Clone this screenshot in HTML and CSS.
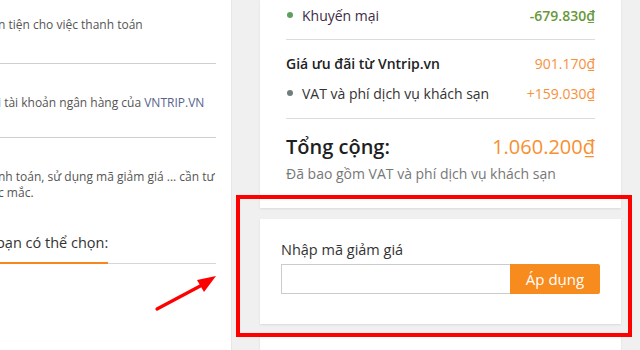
FILE: index.html
```html
<!DOCTYPE html>
<html lang="vi">
<head>
<meta charset="utf-8">
<title>Thanh toán</title>
<link rel="stylesheet" href="styles.css">
</head>
<body>
<div class="page">
  <section class="left">
    <div class="pay-block b1">
      <p class="pay-text">n tiện cho việc thanh toán</p>
    </div>
    <div class="pay-block b2">
      <p class="pay-text">i tài khoản ngân hàng của <span class="brand">VNTRIP.VN</span></p>
    </div>
    <div class="pay-block b3">
      <p class="pay-text">nh toán, sử dụng mã giảm giá ... cần tư<br>c mắc.</p>
    </div>
    <div class="choose">
      <span class="choose-title">bạn có thể chọn:</span>
    </div>
  </section>

  <aside class="right">
    <div class="card summary">
      <div class="sec sec-promo">
        <div class="row">
          <span class="label"><i class="dot dot-green"></i>Khuyến mại</span>
          <span class="amt green">-679.830₫</span>
        </div>
      </div>
      <div class="sec sec-price">
        <div class="row">
          <span class="label strong">Giá ưu đãi từ Vntrip.vn</span>
          <span class="amt orange">901.170₫</span>
        </div>
        <div class="row">
          <span class="label"><i class="dot dot-gray"></i>VAT và phí dịch vụ khách sạn</span>
          <span class="amt orange">+159.030₫</span>
        </div>
      </div>
      <div class="sec sec-total">
        <div class="row total-row">
          <span class="total-label">Tổng cộng:</span>
          <span class="total-amt">1.060.200₫</span>
        </div>
        <p class="note">Đã bao gồm VAT và phí dịch vụ khách sạn</p>
      </div>
    </div>

    <div class="card coupon">
      <label class="coupon-label" for="code">Nhập mã giảm giá</label>
      <div class="coupon-form">
        <input id="code" class="coupon-input" type="text">
        <button class="coupon-btn" type="button">Áp dụng</button>
      </div>
    </div>

    <div class="card next"></div>
  </aside>
</div>

<div class="highlight"></div>
<svg class="arrow" width="80" height="50" viewBox="150 270 80 50" xmlns="http://www.w3.org/2000/svg">
  <line x1="157" y1="309" x2="204" y2="284" stroke="#ff0000" stroke-width="3.2" stroke-linecap="round"/>
  <polygon points="216,276 197,280 204,292" fill="#ff0000"/>
</svg>
</body>
</html>
```

FILE: styles.css
```css
* { box-sizing: border-box; }
html, body { margin: 0; padding: 0; }
body {
  font-family: "Open Sans", "Noto Sans", sans-serif;
  width: 640px;
  height: 350px;
  overflow: hidden;
  background: #f0f0f0;
  position: relative;
}
.page {
  display: flex;
  height: 350px;
}

/* left column */
.left {
  width: 232px;
  flex: 0 0 232px;
  background: #fff;
  border-right: 1px solid #e6e6e6;
  padding-right: 15px;
}
.pay-block {
  border-bottom: 1px solid #cfcfcf;
}
.pay-text {
  margin: 0 0 0 -2px;
  font-size: 12px;
  line-height: 16px;
  color: #555;
}
.brand { color: #56648c; }
.b1 { padding: 17px 0 30px; height: 64px; }
.b2 { padding: 31px 0 0; height: 74px; }
.b3 { border-bottom: 0; padding: 31px 0 0; height: 92px; }
.choose {
  border-bottom: 1px solid #d6d6d6;
  height: 34px;
}
.choose-title {
  display: inline-block;
  font-size: 14.5px;
  line-height: 22px;
  color: #333;
  padding-bottom: 8px;
  border-bottom: 2px solid #f7861b;
  margin-bottom: -1px;
  margin-top: 2px;
  margin-left: -4px;
}

/* right column */
.right {
  flex: 1;
  padding-left: 28px;
  padding-right: 19px;
  display: flex;
  flex-direction: column;
  gap: 11px;
}
.card {
  background: #fff;
  box-shadow: 0 1px 2px rgba(0, 0, 0, 0.09);
}
.summary {
  padding: 0 26px 24px 26px;
}
.sec-promo {
  padding-bottom: 9px;
  border-bottom: 1px solid #dcdcdc;
}
.sec-price {
  padding: 8px 0 10px;
  border-bottom: 1px solid #dcdcdc;
}
.row {
  display: flex;
  justify-content: space-between;
  align-items: center;
  height: 30px;
  font-size: 14px;
}
.label {
  color: #333;
  display: flex;
  align-items: center;
}
.label.strong { color: #222; font-weight: 600; }
.sec-promo .label { color: #3d2d45; }
.dot {
  display: inline-block;
  width: 6px;
  height: 6px;
  border-radius: 50%;
  margin: 0 9px 0 1px;
}
.dot-green { background: #5e9e5e; }
.dot-gray { background: #6f7d7b; }
.amt { font-size: 14px; }
.green { color: #68983a; font-weight: 600; }
.orange { color: #f7913b; font-weight: 500; }
.sec-total { padding-top: 12px; }
.total-row { height: 30px; }
.total-label {
  font-size: 20px;
  font-weight: 600;
  color: #1f1f1f;
}
.total-amt {
  font-size: 20px;
  color: #f7902f;
  font-weight: 500;
}
.note {
  margin: 3px 0 0;
  font-size: 14px;
  line-height: 20px;
  color: #777;
}

.coupon {
  padding: 21px 21px 30px;
}
.coupon-label {
  display: block;
  font-size: 14.5px;
  line-height: 20px;
  color: #333;
  margin-bottom: 4px;
}
.coupon-form {
  display: flex;
  height: 30px;
}
.coupon-input {
  flex: 1;
  height: 30px;
  border: 1px solid #cccccc;
  border-right: 0;
  margin: 0;
  padding: 0 8px;
  font: inherit;
  outline: none;
}
.coupon-btn {
  width: 90px;
  height: 30px;
  border: 0;
  margin: 0;
  background: #f78b1e;
  color: #fff;
  font-family: inherit;
  font-size: 15px;
  border-radius: 0 2px 2px 0;
  padding: 0;
}
.next { flex: 1; }

/* annotation overlays */
.highlight {
  position: absolute;
  left: 236px;
  top: 195px;
  width: 396px;
  height: 142px;
  border: 4px solid #ff0000;
}
.arrow {
  position: absolute;
  left: 150px;
  top: 270px;
}
```
